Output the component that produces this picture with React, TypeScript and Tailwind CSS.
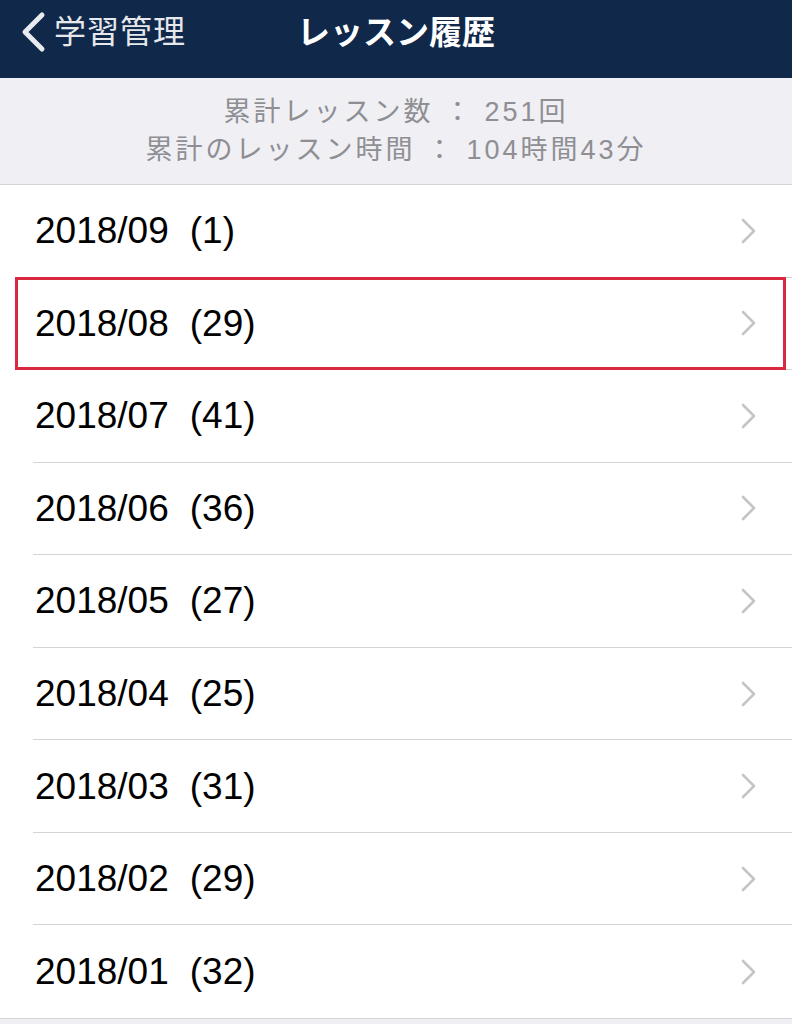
import React from "react";

const rows = [
  ["2018/09", "(1)"],
  ["2018/08", "(29)"],
  ["2018/07", "(41)"],
  ["2018/06", "(36)"],
  ["2018/05", "(27)"],
  ["2018/04", "(25)"],
  ["2018/03", "(31)"],
  ["2018/02", "(29)"],
  ["2018/01", "(32)"],
];

const jp = { fontFamily: '"Liberation Sans", "Noto Sans CJK JP", sans-serif' };

function Chevron() {
  return (
    <svg width="18" height="28" viewBox="0 0 18 28" className="shrink-0">
      <path d="M4 3 L15 14 L4 25" fill="none" stroke="#c4c4c9" strokeWidth="2.6" strokeLinecap="round" strokeLinejoin="round" />
    </svg>
  );
}

export default function App() {
  return (
    <div className="w-[792px] h-[1024px] bg-[#efeff4] overflow-hidden" style={jp}>
      <header className="relative h-[78px] bg-[#10284a] flex items-center pb-[14px]">
        <div className="flex items-center pl-[18px]">
          <svg width="30" height="44" viewBox="0 0 30 44">
            <path d="M24 5 L7 22 L24 39" fill="none" stroke="#e8eaee" strokeWidth="5" strokeLinecap="round" strokeLinejoin="round" />
          </svg>
          <span className="ml-[6px] text-[32px] leading-none text-[#e6e8ec] tracking-[1px]">学習管理</span>
        </div>
        <div className="absolute inset-0 flex items-center justify-center pointer-events-none pb-[14px]">
          <span className="text-[33px] leading-none font-bold text-white">レッスン履歴</span>
        </div>
      </header>
      <section className="h-[107px] border-b border-[#d4d4d8] flex flex-col items-center justify-center text-[27px] leading-[38px] text-[#8e8e93] tracking-[3px]">
        <div>累計レッスン数 ： 251回</div>
        <div>累計のレッスン時間 ： 104時間43分</div>
      </section>
      <div className="bg-white border-b border-[#d4d4d8]">
        {rows.map(([d, c], i) => (
          <div key={d} className="relative h-[92.55px] pl-[33px]">
            <div className={`h-full flex items-center pr-[35px] ${i < rows.length - 1 ? "border-b border-[#d4d4d8]" : ""}`}>
              <span className="text-[37px] leading-none text-black pl-[2px]">{d}</span>
              <span className="text-[37px] leading-none text-black ml-[21px]">{c}</span>
              <span className="flex-1" />
              <Chevron />
            </div>
            {i === 1 && (
              <div className="absolute top-[-1px] bottom-[0px] left-[15px] right-[6px] border-[3px] border-[#d9283f] pointer-events-none" />
            )}
          </div>
        ))}
      </div>
    </div>
  );
}
